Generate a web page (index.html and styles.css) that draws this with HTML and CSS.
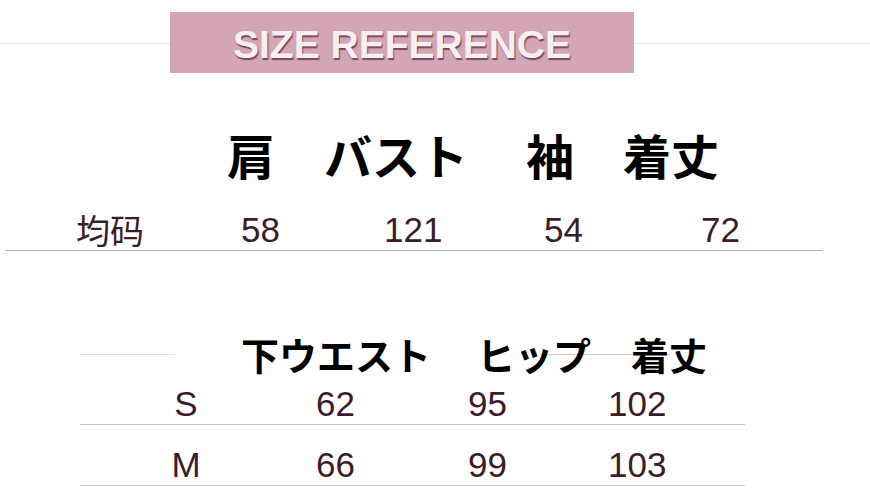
FILE: index.html
```html
<!DOCTYPE html>
<html lang="ja">
<head>
<meta charset="utf-8">
<title>Size Reference</title>
<link rel="stylesheet" href="styles.css">
</head>
<body>
<div class="page">
  <header class="banner-row">
    <div class="banner">SIZE REFERENCE</div>
  </header>

  <section class="table1">
    <div class="head1">
      <span>肩</span><span>バスト</span><span>袖</span><span>着丈</span>
    </div>
    <div class="row1">
      <span class="label-cjk">均码</span><span>58</span><span>121</span><span>54</span><span>72</span>
    </div>
  </section>

  <section class="table2">
    <div class="head2">
      <span>下ウエスト</span><span>ヒップ</span><span>着丈</span>
    </div>
    <div class="row2 first">
      <span class="size">S</span><span>62</span><span>95</span><span>102</span>
    </div>
    <div class="row2">
      <span class="size">M</span><span>66</span><span>99</span><span>103</span>
    </div>
  </section>
</div>
</body>
</html>
```

FILE: styles.css
```css
html, body {
  margin: 0;
  padding: 0;
  background: #ffffff;
}

.page {
  width: 870px;
  height: 489px;
  overflow: hidden;
  font-family: "Liberation Sans", Arial, sans-serif;
}

/* ---------- banner ---------- */
.banner-row {
  padding-top: 12px;
  height: 61px;
  background-image: linear-gradient(#e6e6e6, #e6e6e6);
  background-repeat: no-repeat;
  background-size: 100% 1px;
  background-position: 0 43px;
}

.banner {
  margin-left: 170px;
  width: 464px;
  height: 59px;
  padding-top: 2px;
  background: #d4a5b5;
  color: #f5eff1;
  font-family: "Liberation Sans", Arial, sans-serif;
  font-weight: bold;
  font-size: 39px;
  line-height: 61px;
  text-align: center;
  text-shadow: 1px 2px 1px rgba(90, 40, 60, 0.75);
}

/* ---------- table 1 ---------- */
.table1 {
  padding-top: 57px;
}

.head1 {
  display: grid;
  grid-template-columns: 97px 202px 97px auto;
  padding-left: 227px;
  height: 48px;
  font-family: "Noto Sans CJK JP", "Noto Sans CJK SC", sans-serif;
  font-weight: bold;
  font-size: 48px;
  line-height: 48px;
  color: #000;
}

.row1 {
  display: grid;
  grid-template-columns: 165px 143px 160px 157px auto;
  margin-top: 32px;
  margin-left: 5px;
  width: 818px;
  box-sizing: border-box;
  padding-left: 71px;
  height: 41px;
  border-bottom: 1px solid #bdb3b8;
  font-size: 35px;
  line-height: 40px;
  color: #3b1c28;
}

.label-cjk {
  font-family: "Noto Sans CJK SC", "Noto Sans CJK JP", sans-serif;
  font-size: 34px;
  font-weight: normal;
}

/* ---------- table 2 ---------- */
.table2 {
  margin-top: 84px;
  margin-left: 80px;
  width: 665px;
}

.head2 {
  display: grid;
  grid-template-columns: 236px 154px auto;
  padding-left: 161px;
  height: 38px;
  font-family: "Noto Sans CJK JP", "Noto Sans CJK SC", sans-serif;
  font-weight: bold;
  font-size: 38px;
  line-height: 38px;
  color: #000;
  background-image:
    linear-gradient(#e4dde0, #e4dde0),
    linear-gradient(#dcc3ca, #dcc3ca);
  background-repeat: no-repeat;
  background-size: 95px 1px, 130px 1px;
  background-position: 0 19px, 460px 19px;
}

.row2 {
  display: grid;
  grid-template-columns: 236px 152px 140px auto;
  padding-top: 20px;
  height: 40px;
  border-bottom: 1px solid #c9c2c6;
  font-size: 35px;
  line-height: 40px;
  color: #3b1c28;
}

.row2.first {
  margin-top: 11px;
  padding-top: 0;
}

.size {
  width: 212px;
  text-align: center;
}
```
